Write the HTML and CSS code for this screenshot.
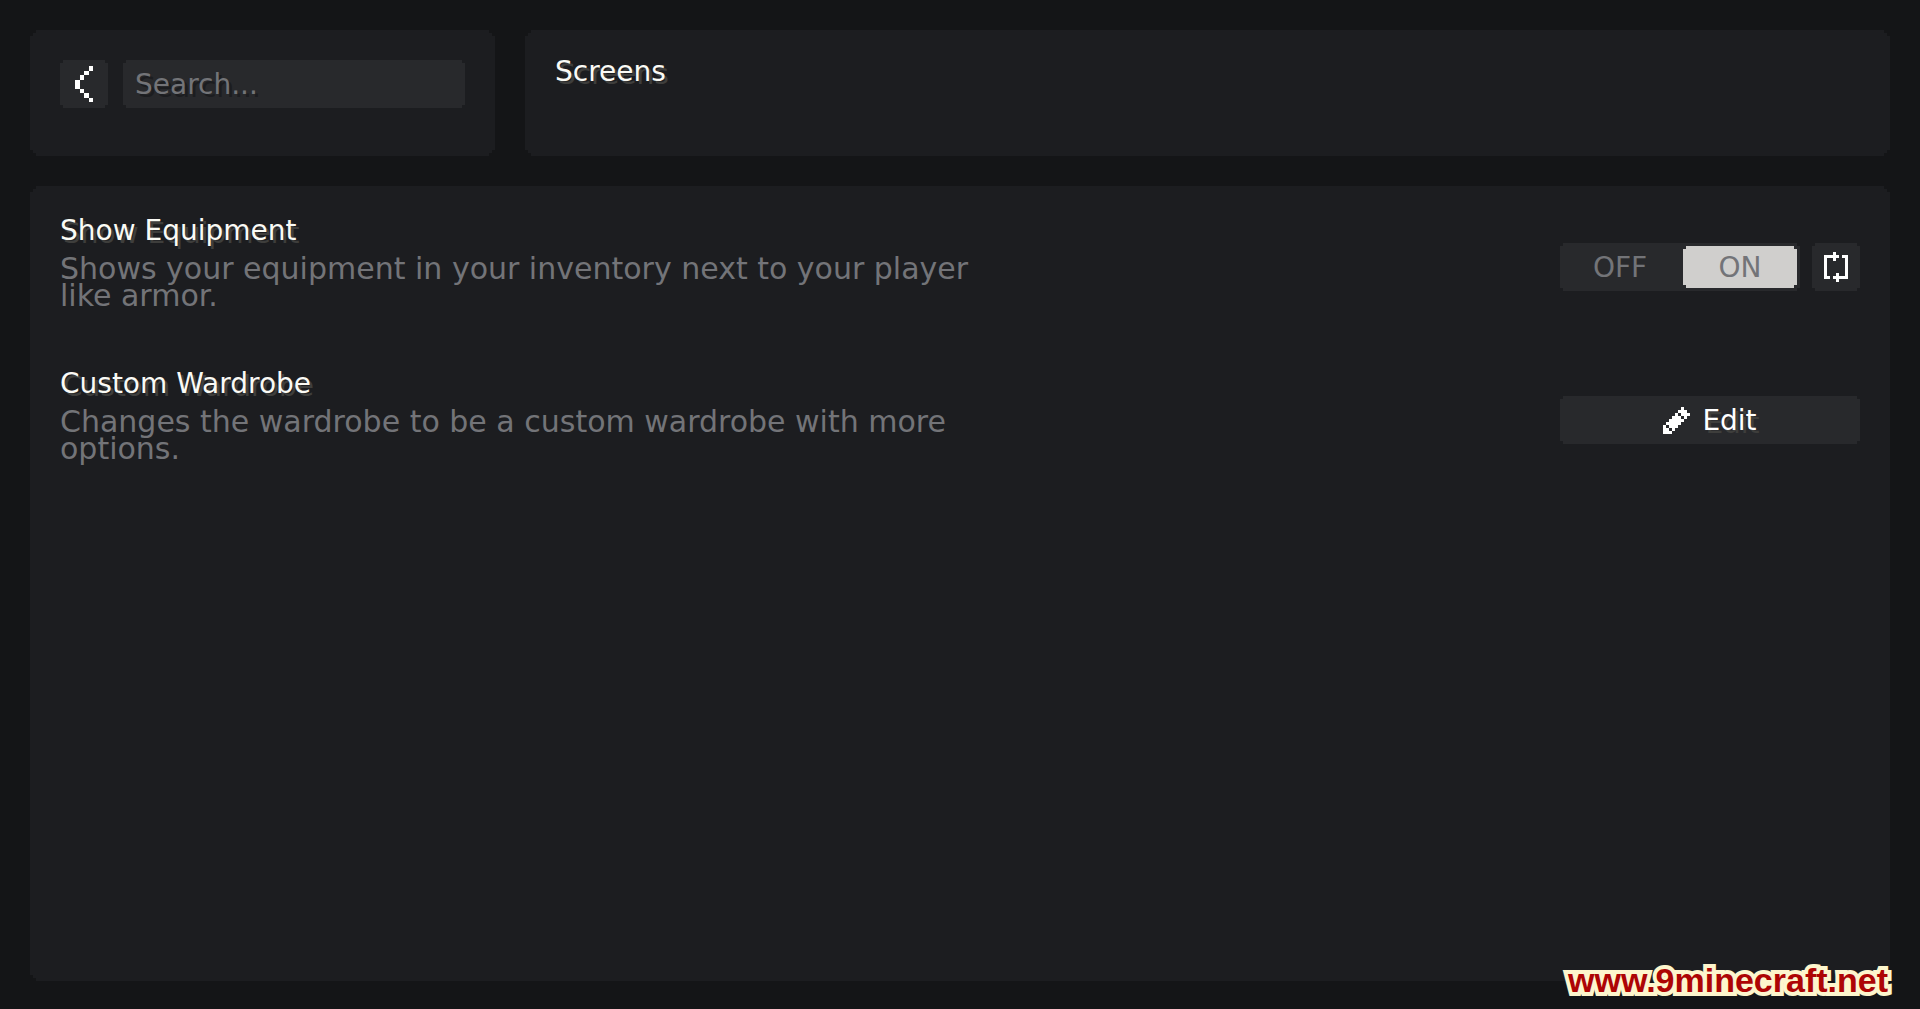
FILE: index.html
```html
<!DOCTYPE html>
<html lang="en">
<head>
<meta charset="utf-8">
<meta name="viewport" content="width=device-width, initial-scale=1">
<title>Screens</title>
<link rel="stylesheet" href="styles.css">
</head>
<body>
<div class="page">
  <header class="top">
    <form class="card search" role="search">
      <button class="control icon-button" type="button" aria-label="Back">
        <svg class="back-icon" viewBox="0 0 18 36" shape-rendering="crispEdges" fill="currentColor" aria-hidden="true">
          <path d="M14 0h4v5h-4zM9 5h5v4h-5zM5 9h4v5h-4zM0 14h5v9h-5zM5 23h4v4h-4zM9 27h5v5h-5zM14 32h4v4h-4z"/>
        </svg>
      </button>
      <input class="control search-input" type="text" placeholder="Search..." aria-label="Search">
    </form>
    <div class="card heading">
      <h1 class="title">Screens</h1>
    </div>
  </header>
  <main class="card options">
    <section class="option">
      <div class="option-text">
        <h2 class="title">Show Equipment</h2>
        <p class="description">Shows your equipment in your inventory next to your player like armor.</p>
      </div>
      <div class="actions">
        <fieldset class="control toggle" aria-label="Show Equipment">
          <label class="choice"><input class="radio" type="radio" name="equipment">OFF</label>
          <label class="choice"><input class="radio" type="radio" name="equipment" checked>ON</label>
        </fieldset>
        <button class="control icon-button" type="button" aria-label="Reset">
          <svg class="reset-icon" viewBox="0 0 8 10" shape-rendering="crispEdges" fill="currentColor" aria-hidden="true">
            <path d="M0 1h3V0h1v1h1v1H4v1H3V2H1v6h1v1H0zM6 1h2v8H5v1H4V9H3V8h1V7h1v1h2V2H6z"/>
          </svg>
        </button>
      </div>
    </section>
    <section class="option">
      <div class="option-text">
        <h2 class="title">Custom Wardrobe</h2>
        <p class="description">Changes the wardrobe to be a custom wardrobe with more options.</p>
      </div>
      <div class="actions">
        <button class="control edit" type="button">
          <svg class="edit-icon" viewBox="0 0 9 9" shape-rendering="crispEdges" fill="currentColor" aria-hidden="true">
            <path d="M6 0h1v1h1v1h1v1H8v1H7V3H6V2H5V1h1zM4 2h1v1h1v1h1v1H6v1H5v1H4v1H3V7H2V6H1V5h1V4h1V3h1zM0 6h1v1h1v1h1v1H0z"/>
          </svg>
          <span>Edit</span>
        </button>
      </div>
    </section>
  </main>
  <a class="watermark" href="#">www.9minecraft.net</a>
</div>
</body>
</html>
```

FILE: styles.css
```css
* {
  box-sizing: border-box;
}

body {
  margin: 0;
  background: #141517;
  color: #fafaf5;
  font-family: "DejaVu Sans", Verdana, sans-serif;
  font-size: 28px;
  line-height: 27px;
}

button,
input {
  font: inherit;
  color: inherit;
}

.page {
  position: relative;
  display: flex;
  flex-direction: column;
  gap: 30px;
  min-height: 100vh;
  padding: 30px 30px 28px;
}

/* Panels and controls have stepped pixel corners */
.card {
  background: #1c1d20;
  clip-path: polygon(
    0 6px, 3px 6px, 3px 3px, 6px 3px, 6px 0,
    calc(100% - 6px) 0, calc(100% - 6px) 3px, calc(100% - 3px) 3px, calc(100% - 3px) 6px, 100% 6px,
    100% calc(100% - 6px), calc(100% - 3px) calc(100% - 6px), calc(100% - 3px) calc(100% - 3px), calc(100% - 6px) calc(100% - 3px), calc(100% - 6px) 100%,
    6px 100%, 6px calc(100% - 3px), 3px calc(100% - 3px), 3px calc(100% - 6px), 0 calc(100% - 6px));
}

.control,
.choice {
  clip-path: polygon(
    0 3px, 3px 3px, 3px 0,
    calc(100% - 3px) 0, calc(100% - 3px) 3px, 100% 3px,
    100% calc(100% - 3px), calc(100% - 3px) calc(100% - 3px), calc(100% - 3px) 100%,
    3px 100%, 3px calc(100% - 3px), 0 calc(100% - 3px));
}

.control {
  height: 48px;
  margin: 0;
  padding: 0;
  border: 0;
  background: #28292c;
}

.top {
  display: flex;
  gap: 30px;
}

.search {
  display: flex;
  gap: 15px;
  width: 25%;
  padding: 30px 30px 48px;
}

.icon-button {
  display: flex;
  flex: none;
  align-items: center;
  justify-content: center;
  width: 48px;
  color: #ffffff;
}

.back-icon {
  width: 18px;
  height: 36px;
}

.reset-icon {
  width: 24px;
  height: 30px;
}

.edit-icon {
  width: 27px;
  height: 27px;
}

.search-input {
  flex: 1;
  min-width: 0;
  padding: 0 12px;
}

.search-input::placeholder {
  color: #737478;
  opacity: 1;
  text-shadow: 3px 3px #1c1d20;
}

.heading {
  flex: 1;
  padding: 27px 30px;
}

.title {
  margin: 0;
  font-size: 28px;
  font-weight: 400;
  line-height: 29px;
  text-shadow: 3px 3px #3e3e3c;
}

.options {
  display: flex;
  flex: 1;
  flex-direction: column;
  gap: 60px;
  padding: 30px;
}

.option {
  display: flex;
  align-items: flex-start;
  justify-content: space-between;
}

.option-text {
  display: flex;
  flex-direction: column;
  gap: 10px;
  width: 52%;
}

.description {
  margin: 0;
  color: #737478;
  font-size: 30px;
}

.actions {
  display: flex;
  gap: 12px;
  width: 300px;
  padding-top: 27px;
}

.toggle {
  display: grid;
  flex: 1;
  grid-template-columns: 1fr 1fr;
  gap: 6px;
  min-width: 0;
  padding: 3px;
}

.choice {
  display: flex;
  align-items: center;
  justify-content: center;
  color: #737478;
}

.choice:has(:checked) {
  background: #d0cfcd;
}

.radio {
  position: absolute;
  margin: 0;
  opacity: 0;
}

.edit {
  display: flex;
  flex: 1;
  align-items: center;
  justify-content: center;
  gap: 12px;
  color: #ffffff;
  text-shadow: 3px 3px #3e3e3c;
}

.watermark {
  position: absolute;
  right: 32px;
  bottom: 10px;
  color: #ad0505;
  font-family: "Liberation Sans", Arial, sans-serif;
  font-size: 34px;
  font-weight: 700;
  line-height: 38px;
  text-decoration: none;
  paint-order: stroke fill;
  -webkit-text-stroke: 8px #fdf6cd;
}
```
